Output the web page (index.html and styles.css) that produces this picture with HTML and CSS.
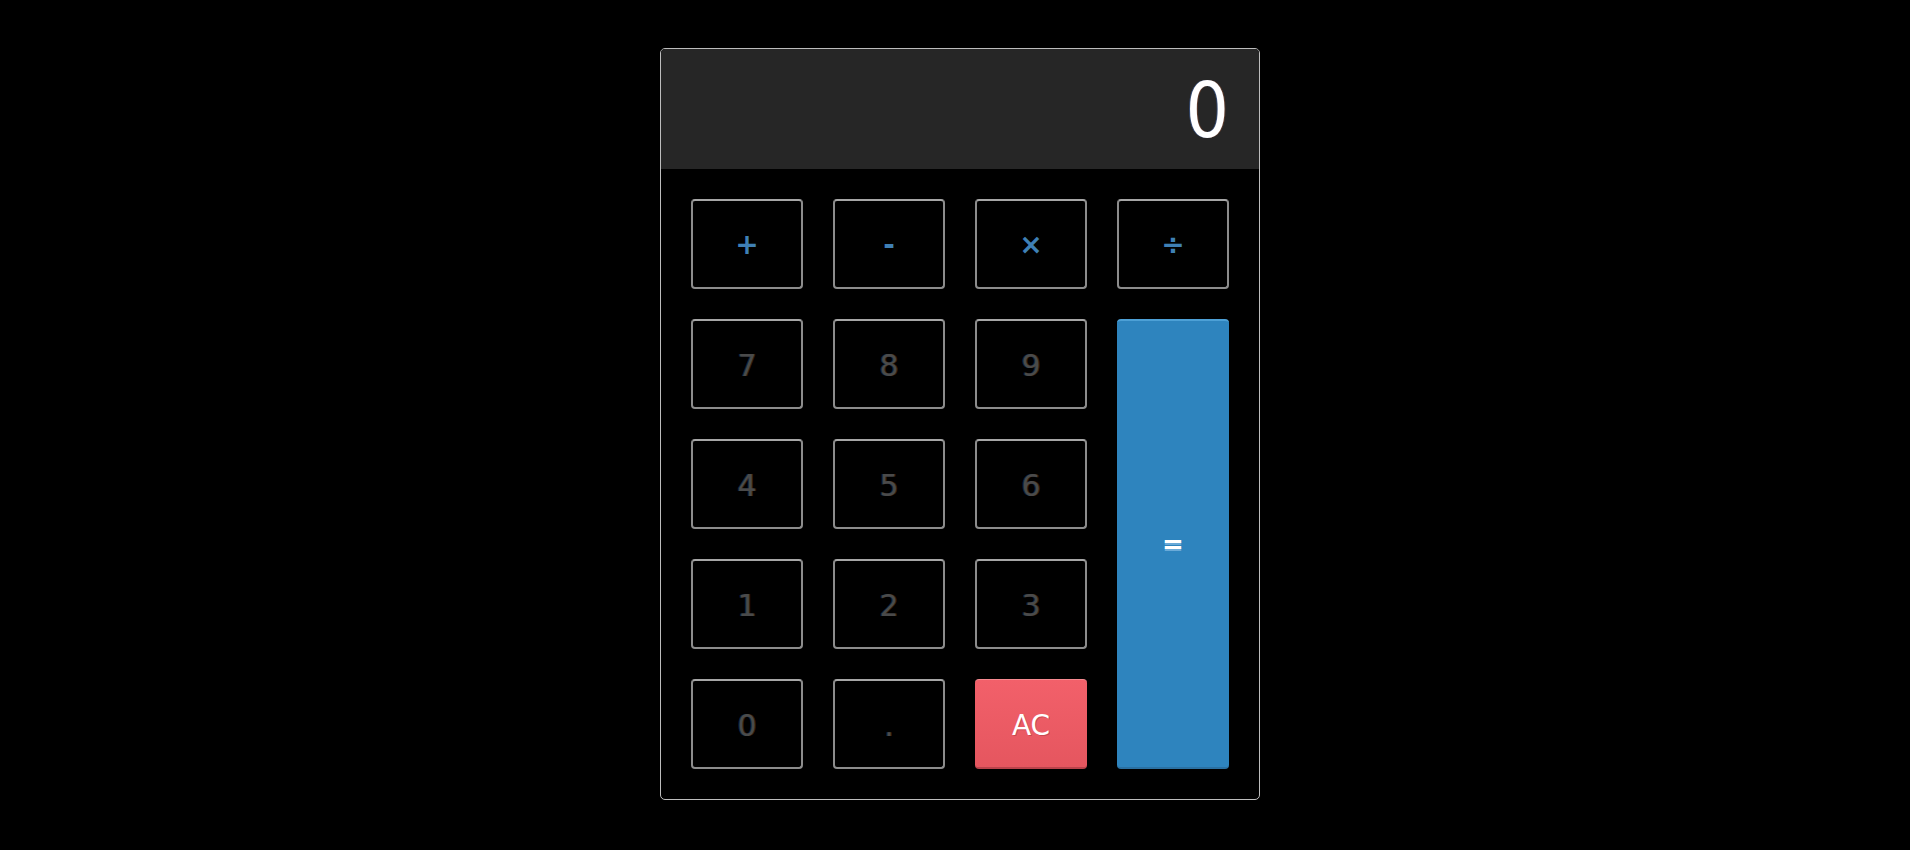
FILE: index.html
```html
<!DOCTYPE html>
<html>
<head>
<meta charset="utf-8">
<link rel="stylesheet" href="styles.css">
</head>
<body>
<div class="page">
  <div class="calc">
    <div class="display">0</div>
    <div class="keys">
      <button class="key op">+</button>
      <button class="key op">-</button>
      <button class="key op">×</button>
      <button class="key op">÷</button>
      <button class="key num">7</button>
      <button class="key num">8</button>
      <button class="key num">9</button>
      <button class="key equals">=</button>
      <button class="key num">4</button>
      <button class="key num">5</button>
      <button class="key num">6</button>
      <button class="key num">1</button>
      <button class="key num">2</button>
      <button class="key num">3</button>
      <button class="key num">0</button>
      <button class="key num">.</button>
      <button class="key clear">AC</button>
    </div>
  </div>
</div>
</body>
</html>
```

FILE: styles.css
```css
html, body {
  margin: 0;
  padding: 0;
  background: #000;
}

.page {
  display: flex;
  justify-content: center;
  padding: 48px 0 0 10px;
  font-family: "DejaVu Sans", Verdana, sans-serif;
}

.calc {
  width: 598px;
  border: 1px solid #bdbdbd;
  border-radius: 5px;
  background: #000;
  overflow: hidden;
}

.display {
  box-sizing: border-box;
  height: 120px;
  padding: 4px 30px 0 0;
  background: #262626;
  color: #fff;
  font-family: "DejaVu Sans Condensed", "DejaVu Sans", sans-serif;
  font-size: 76px;
  line-height: 116px;
  text-align: right;
  text-shadow: -1px 0 0 rgba(80, 140, 255, 0.35), 1px 0 0 rgba(255, 120, 60, 0.25);
}

.keys {
  display: grid;
  grid-template-columns: repeat(4, 112px);
  grid-template-rows: repeat(5, 90px);
  gap: 30px;
  padding: 30px;
}

.key {
  box-sizing: border-box;
  margin: 0;
  padding: 3px 0 0;
  font-family: "DejaVu Sans", Verdana, sans-serif;
  font-size: 30px;
  background: #000;
  border: 2px solid #8c8c8c;
  border-top-color: #a6a6a6;
  border-radius: 4px;
  cursor: pointer;
}

.op {
  color: #3f80b5;
  font-size: 28px;
  font-weight: bold;
  padding-top: 0;
}

.num {
  color: #4a4a4a;
  text-shadow: -1px 0 0 rgba(60, 110, 170, 0.35), 1px 0 0 rgba(170, 110, 60, 0.3);
}

.equals {
  grid-column: 4;
  grid-row: 2 / span 4;
  padding-top: 0;
  background: #2e84be;
  border: none;
  border-top: 2px solid #4da0d6;
  border-bottom: 2px solid #2a70a2;
  color: #fff;
  text-shadow: 0 2px 0 #6aaad8;
  font-size: 26px;
  font-weight: bold;
}

.clear {
  background: linear-gradient(#f2606a, #e5565f);
  border: none;
  border-top: 1px solid #f68a90;
  border-bottom: 2px solid #b9434b;
  color: #fff;
  font-size: 28px;
  text-shadow: 1px 1px 0 rgba(150, 40, 50, 0.4);
}
```
